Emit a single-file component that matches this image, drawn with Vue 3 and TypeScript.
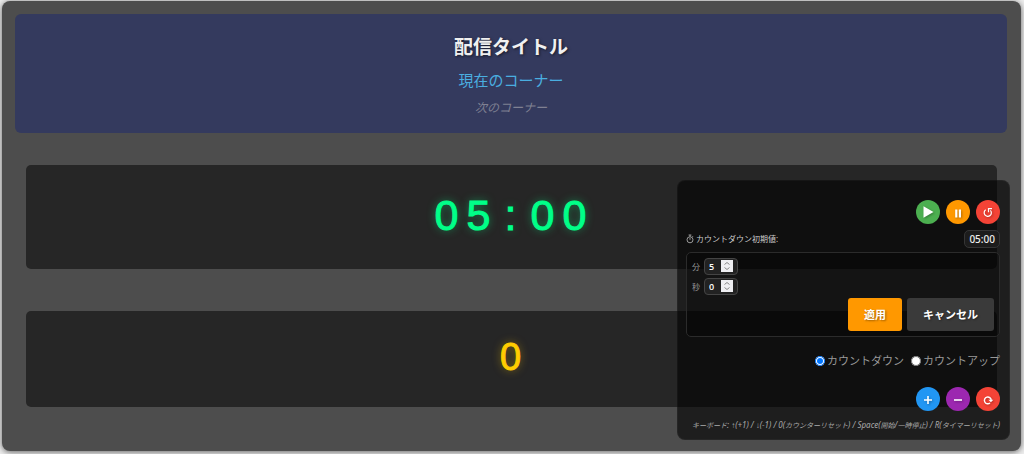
<script setup lang="ts">
import { computed, onBeforeUnmount, onMounted, ref } from 'vue'

const minutes = ref(5)
const seconds = ref(0)
const initial = ref(300)
const elapsed = ref(0)
const counter = ref(0)
const mode = ref<'down' | 'up'>('down')
const running = ref(false)

const pad = (n: number) => String(n).padStart(2, '0')
const format = (s: number) => `${pad(Math.floor(s / 60))}:${pad(s % 60)}`
const initialText = computed(() => format(initial.value))
const timeText = computed(() =>
  format(mode.value === 'down' ? Math.max(0, initial.value - elapsed.value) : elapsed.value),
)

function apply() {
  initial.value = minutes.value * 60 + seconds.value
  elapsed.value = 0
}
function cancel() {
  minutes.value = Math.floor(initial.value / 60)
  seconds.value = initial.value % 60
}
function resetTimer() {
  running.value = false
  elapsed.value = 0
}
function onKey(e: KeyboardEvent) {
  if (e.target instanceof HTMLInputElement) return
  if (e.key === 'ArrowUp') counter.value++
  else if (e.key === 'ArrowDown') counter.value--
  else if (e.key === '0') counter.value = 0
  else if (e.key === ' ') running.value = !running.value
  else if (e.key === 'r' || e.key === 'R') resetTimer()
}

let tick = 0
onMounted(() => {
  window.addEventListener('keydown', onKey)
  tick = window.setInterval(() => {
    if (running.value) elapsed.value++
  }, 1000)
})
onBeforeUnmount(() => {
  window.removeEventListener('keydown', onKey)
  window.clearInterval(tick)
})
</script>

<template>
  <main class="stage">
    <header class="heading">
      <h1>配信タイトル</h1>
      <p class="current">現在のコーナー</p>
      <p class="next">次のコーナー</p>
    </header>

    <section class="display timer">
      <span v-for="(ch, i) in timeText" :key="i" class="digit">{{ ch }}</span>
    </section>
    <section class="display counter">{{ counter }}</section>

    <aside class="panel">
      <div class="round-row">
        <button class="round green" type="button" aria-label="開始" @click="running = true">
          <svg viewBox="0 0 24 24"><path d="M7.5 6.3v11.4L17.5 12z" fill="#fff" /></svg>
        </button>
        <button class="round orange" type="button" aria-label="一時停止" @click="running = false">
          <svg viewBox="0 0 24 24"><path d="M9.2 9.5h2.2v8H9.2zM12.8 9.5H15v8h-2.2z" fill="#fff" /></svg>
        </button>
        <button class="round red" type="button" aria-label="タイマーリセット" @click="resetTimer">
          <svg viewBox="0 0 24 24" fill="none" stroke="#fff" stroke-width="1.2">
            <path d="M9.7 9.8A3.6 3.6 0 1 0 14.4 10.3" />
            <path d="M16 8.7h-3.5v3.6" />
          </svg>
        </button>
      </div>

      <div class="initial">
        <span class="initial-label">
          <svg class="watch" viewBox="0 0 8 10" fill="none" stroke="#bbb" stroke-width=".8">
            <circle cx="4" cy="5.8" r="3" />
            <path d="M4 2.8V1M2.6 1h2.8M4 5.8V4M6.4 2.8l.8-.8" />
          </svg>
          カウントダウン初期値:
        </span>
        <span class="badge">{{ initialText }}</span>
      </div>

      <div class="editor">
        <div class="field">
          <label for="minutes">分</label>
          <input id="minutes" v-model.number="minutes" type="number" min="0" max="99" />
        </div>
        <div class="field">
          <label for="seconds">秒</label>
          <input id="seconds" v-model.number="seconds" type="number" min="0" max="59" />
        </div>
        <div class="actions">
          <button class="apply" type="button" @click="apply">適用</button>
          <button class="cancel" type="button" @click="cancel">キャンセル</button>
        </div>
      </div>

      <div class="modes">
        <label><input v-model="mode" type="radio" name="mode" value="down" />カウントダウン</label>
        <label><input v-model="mode" type="radio" name="mode" value="up" />カウントアップ</label>
      </div>

      <div class="round-row">
        <button class="round blue" type="button" aria-label="+1" @click="counter++">
          <svg viewBox="0 0 24 24"><path d="M8 13h8M12 9v8" stroke="#fff" stroke-width="1.6" /></svg>
        </button>
        <button class="round purple" type="button" aria-label="-1" @click="counter--">
          <svg viewBox="0 0 24 24"><path d="M8 13h8" stroke="#fff" stroke-width="1.6" /></svg>
        </button>
        <button class="round red" type="button" aria-label="カウンターリセット" @click="counter = 0">
          <svg viewBox="0 0 24 24" fill="none" stroke="#fff" stroke-width="1.4">
            <path d="M14 16A3.4 3.4 0 1 1 15.2 13.2" />
            <path d="M12.4 12.8h5l-2.5 2.5z" fill="#fff" stroke="none" />
          </svg>
        </button>
      </div>

      <p class="hint">
        <span>キーボード</span>: ↑(+1) / ↓(-1) / 0(<span>カウンターリセット</span>) / Space(<span>開始</span>/<span>一時停止</span>) / R(<span>タイマーリセット</span>)
      </p>
    </aside>
  </main>
</template>

<style>
body {
  background: #eee;
}
</style>

<style scoped>
.stage {
  position: relative;
  margin: 1px 3px 3px 2px;
  padding: 13px 14px 44px 13px;
  border-radius: 8px;
  background: #4d4d4d;
  box-shadow: 0 1px 6px rgba(0, 0, 0, 0.6);
  color: #fff;
  font-family: 'Noto Sans', 'Noto Sans CJK JP', sans-serif;
}
.heading {
  padding: 19px 16px 14px;
  border-radius: 6px;
  background: #343a5e;
  text-align: center;
}
h1,
p {
  margin: 0;
}
h1 {
  font-size: 19px;
  line-height: 28px;
  font-weight: 700;
  color: #f0f0f0;
  text-shadow: 1px 1px 3px rgba(0, 0, 0, 0.6);
}
.current {
  margin-top: 7px;
  font-size: 15px;
  line-height: 24px;
  color: #4aaee0;
}
.next {
  margin-top: 6px;
  padding-bottom: 1px;
  font-size: 12px;
  line-height: 20px;
  font-style: italic;
  color: #7f8092;
}
.display {
  display: flex;
  box-sizing: border-box;
  justify-content: center;
  align-items: center;
  margin: 0 10px 0 11px;
  padding: 0 2px 4px 0;
  border-radius: 5px;
  background: #262626;
  font-family: 'Liberation Sans', Arial, sans-serif;
  stroke-linejoin: round;
}
.timer {
  margin-top: 32px;
  height: 104px;
  font-size: 43px;
  line-height: 48px;
  color: #00ff88;
  -webkit-text-stroke: 1px #00ff88;
  text-shadow: 0 0 8px rgba(0, 255, 136, 0.5);
}
.digit {
  width: 32px;
  text-align: center;
}
.counter {
  margin-top: 42px;
  height: 96px;
  font-size: 38px;
  line-height: 44px;
  color: #ffcc00;
  -webkit-text-stroke: 1px #ffcc00;
  text-shadow: 0 0 8px rgba(255, 204, 0, 0.5);
}
.panel {
  position: absolute;
  right: 11px;
  bottom: 11px;
  box-sizing: border-box;
  width: 333px;
  padding: 19px 9px 7px 8px;
  border: 1px solid rgba(255, 255, 255, 0.03);
  border-radius: 8px;
  background: rgba(0, 0, 0, 0.6);
}
.round-row {
  display: flex;
  justify-content: flex-end;
  gap: 6px;
}
.round {
  width: 24px;
  height: 24px;
  padding: 0;
  border: 0;
  border-radius: 50%;
}
.round svg {
  display: block;
  width: 24px;
  height: 24px;
  filter: drop-shadow(1px 1px 1px rgba(0, 0, 0, 0.3));
}
.green { background: #4caf50; }
.orange { background: #ff9800; }
.red { background: #f44336; }
.blue { background: #2196f3; }
.purple { background: #9c27b0; }
.initial {
  display: flex;
  justify-content: space-between;
  align-items: center;
  margin-top: 6px;
}
.initial-label {
  display: flex;
  align-items: center;
  gap: 2px;
  font-size: 8px;
  line-height: 12px;
  color: #ccc;
}
.watch {
  width: 8px;
  height: 10px;
}
.badge {
  padding: 0 4px;
  border: 1px solid #353535;
  border-radius: 5px;
  background: #1c1c1c;
  color: #eee;
  font-size: 10px;
  line-height: 16px;
  font-weight: 500;
  font-family: 'Noto Sans', sans-serif;
}
.editor {
  margin-top: 4px;
  padding: 5px;
  border: 1px solid #2b2b2b;
  border-radius: 5px;
  background: rgba(0, 0, 0, 0.3);
}
.field {
  display: flex;
  align-items: center;
  gap: 4px;
  margin-bottom: 3px;
  font-size: 8px;
  line-height: 12px;
  color: #999;
}
.field label {
  width: 8px;
}
.field input {
  box-sizing: border-box;
  width: 34px;
  height: 17px;
  padding: 1px 4px;
  border: 1px solid #444;
  border-radius: 4px;
  background: #222;
  color: #fff;
  font: 600 9px/12px 'Open Sans', 'Noto Sans', sans-serif;
}
.field input::-webkit-inner-spin-button {
  appearance: none;
  opacity: 1;
  width: 12px;
  height: 12px;
  background: #efeff2
    url("data:image/svg+xml,%3Csvg xmlns='http://www.w3.org/2000/svg' viewBox='0 0 12 12' fill='none' stroke='%23888'%3E%3Cpath d='M3.5 4.5 6 2.5 8.5 4.5M3.5 7.5 6 9.5 8.5 7.5'/%3E%3C/svg%3E");
}
.actions {
  display: flex;
  justify-content: flex-end;
  gap: 5px;
}
.actions button {
  height: 33px;
  padding: 0 16px;
  border: 0;
  border-radius: 3px;
  color: #fff;
  font: 700 11px/16px 'Noto Sans', 'Noto Sans CJK JP', sans-serif;
  text-shadow: 1px 1px 2px rgba(0, 0, 0, 0.4);
}
.actions .apply { background: #ff9800; }
.actions .cancel { background: #3a3a3a; }
.modes {
  display: flex;
  justify-content: flex-end;
  gap: 7px;
  margin: 16px 0 18px;
  font-size: 11px;
  line-height: 16px;
  color: #999;
}
.modes label {
  display: flex;
  align-items: center;
  gap: 2px;
}
.modes input {
  width: 10px;
  height: 10px;
  margin: 0;
}
.hint {
  margin-top: 8px;
  font-family: 'Noto Sans', 'Liberation Sans', 'Noto Sans CJK JP', sans-serif;
  font-size: 8px;
  line-height: 12px;
  font-style: italic;
  text-align: right;
  white-space: nowrap;
  color: #aaa;
}
.hint span {
  font-size: 7px;
}
</style>
